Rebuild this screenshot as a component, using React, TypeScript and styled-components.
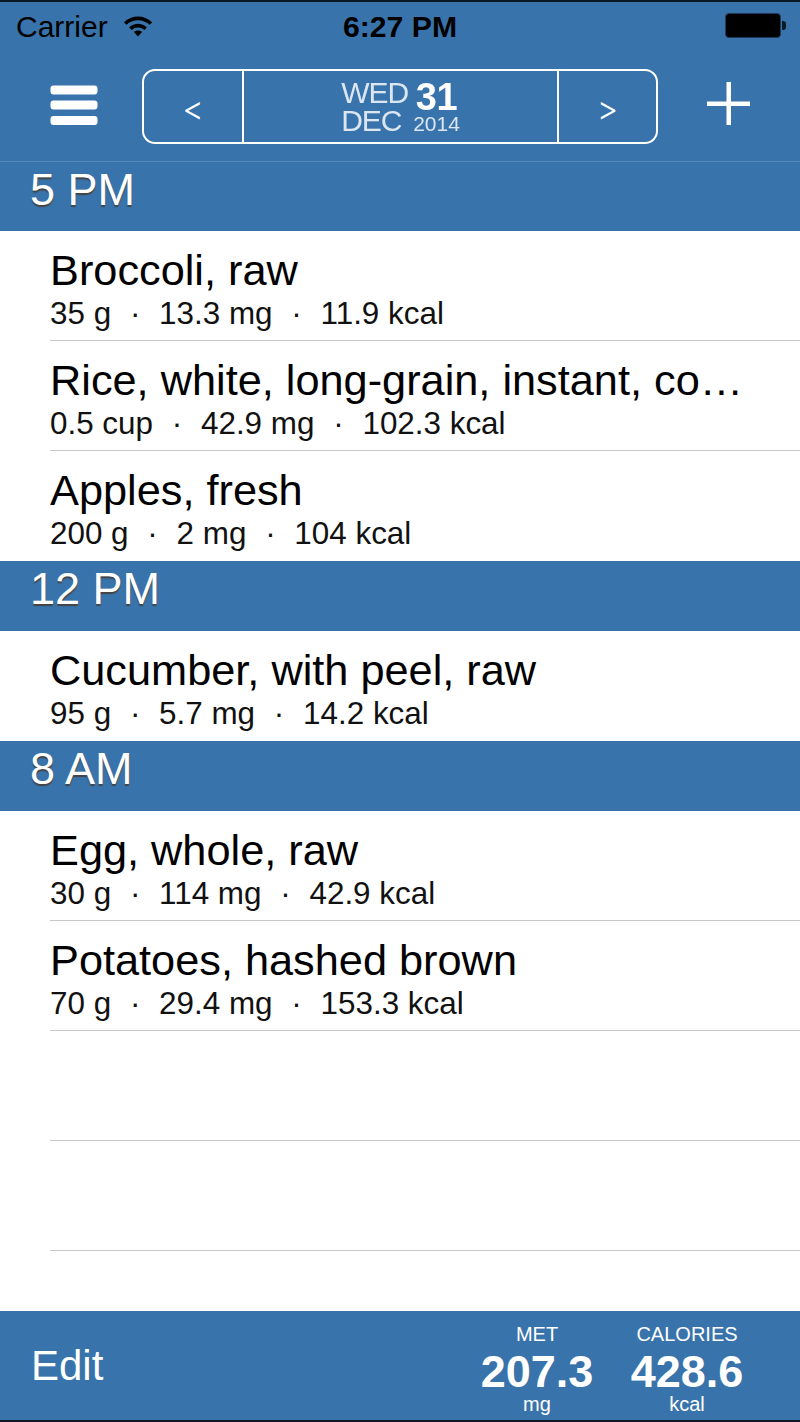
import React from 'react';
import styled, {createGlobalStyle} from "styled-components";

const sections = [
    {
        time: "5 PM",
        items: [
            {name: "Broccoli, raw", amount: "35 g", met: "13.3 mg", kcal: "11.9 kcal"},
            {name: "Rice, white, long-grain, instant, cooked", amount: "0.5 cup", met: "42.9 mg", kcal: "102.3 kcal"},
            {name: "Apples, fresh", amount: "200 g", met: "2 mg", kcal: "104 kcal"},
        ],
    },
    {
        time: "12 PM",
        items: [
            {name: "Cucumber, with peel, raw", amount: "95 g", met: "5.7 mg", kcal: "14.2 kcal"},
        ],
    },
    {
        time: "8 AM",
        items: [
            {name: "Egg, whole, raw", amount: "30 g", met: "114 mg", kcal: "42.9 kcal"},
            {name: "Potatoes, hashed brown", amount: "70 g", met: "29.4 mg", kcal: "153.3 kcal"},
        ],
    },
];

const WifiIcon = () => (
    <svg width="30" height="23" viewBox="0 0 32 24">
        <path d="M1 8.5C9.5 0.5 22.5 0.5 31 8.5L28.4 11.2C21.4 4.8 10.6 4.8 3.6 11.2Z" fill="#000"/>
        <path d="M6.6 14C12 9 20 9 25.4 14L22.8 16.7C18.8 13.2 13.2 13.2 9.2 16.7Z" fill="#000"/>
        <path d="M11.6 19C14.2 16.8 17.8 16.8 20.4 19L16 23.6Z" fill="#000"/>
    </svg>
);

const MenuIcon = () => (
    <svg width="48" height="41" viewBox="0 0 48 41">
        <rect x="0.5" y="0.5" width="47" height="9" rx="3" fill="#fff"/>
        <rect x="0.5" y="15.5" width="47" height="9" rx="3" fill="#fff"/>
        <rect x="0.5" y="31" width="47" height="9" rx="3" fill="#fff"/>
    </svg>
);

const PlusIcon = () => (
    <svg width="43" height="43" viewBox="0 0 43 43">
        <rect x="19.5" y="0" width="4.5" height="43" fill="#fff"/>
        <rect x="0" y="19.5" width="43" height="4.5" fill="#fff"/>
    </svg>
);

export default function App() {
    return (
        <Screen>
            <GlobalStyle/>
            <Header>
                <StatusBar>
                    <Carrier>Carrier <WifiIcon/></Carrier>
                    <Clock>6:27 PM</Clock>
                    <Battery><BatteryNub/></Battery>
                </StatusBar>
                <NavBar>
                    <MenuIcon/>
                    <DatePicker>
                        <DateArrow>&lt;</DateArrow>
                        <DateCell>
                            <DateWords>WED<br/>DEC</DateWords>
                            <DateNumbers>
                                <DayNumber>31</DayNumber>
                                <YearNumber>2014</YearNumber>
                            </DateNumbers>
                        </DateCell>
                        <DateArrow>&gt;</DateArrow>
                    </DatePicker>
                    <PlusIcon/>
                </NavBar>
            </Header>
            <List>
                {sections.map(section => (
                    <section key={section.time}>
                        <SectionTitle>{section.time}</SectionTitle>
                        {section.items.map((item, i) => (
                            <Row key={item.name} $last={i === section.items.length - 1 && section.time !== "8 AM"}>
                                <FoodName>{item.name}</FoodName>
                                <FoodInfo>
                                    {item.amount}<Dot>·</Dot>{item.met}<Dot>·</Dot>{item.kcal}
                                </FoodInfo>
                            </Row>
                        ))}
                    </section>
                ))}
                <Row/>
                <Row/>
            </List>
            <Footer>
                <EditLabel>Edit</EditLabel>
                <Totals>
                    <Total>
                        <TotalLabel>MET</TotalLabel>
                        <TotalValue>207.3</TotalValue>
                        <TotalUnit>mg</TotalUnit>
                    </Total>
                    <Total>
                        <TotalLabel>CALORIES</TotalLabel>
                        <TotalValue>428.6</TotalValue>
                        <TotalUnit>kcal</TotalUnit>
                    </Total>
                </Totals>
            </Footer>
        </Screen>
    );
}

const blue = "#3873ab";

const GlobalStyle = createGlobalStyle`
  html, body {
    margin: 0;
    padding: 0;
    background: #fff;
    font-family: "Liberation Sans", Arial, sans-serif;
  }
`

const Screen = styled.div`
  width: 800px;
  height: 1422px;
  display: flex;
  flex-direction: column;
  overflow: hidden;
  background: #fff;
`

const Header = styled.header`
  height: 161px;
  box-sizing: border-box;
  flex-shrink: 0;
  background: ${blue};
  border-top: 2px solid #0c1a28;
`

const StatusBar = styled.div`
  height: 50px;
  padding: 0 19px 0 16px;
  display: flex;
  align-items: center;
  justify-content: space-between;
  color: #000;
  font-size: 30px;
`

const Carrier = styled.div`
  width: 203px;
  display: flex;
  align-items: center;
  gap: 15px;

  svg {
    margin-bottom: 3px;
  }
`

const Clock = styled.div`
  font-size: 30.2px;
  font-weight: bold;
`

const Battery = styled.div`
  height: 25px;
  box-sizing: border-box;
  flex: 0 0 56px;
  margin-left: 144px;
  margin-bottom: 3px;
  position: relative;
  background: #000;
  border: 1px solid #1c3a58;
  border-radius: 4px;
`

const BatteryNub = styled.span`
  position: absolute;
  right: -6px;
  top: 7px;
  width: 4px;
  height: 9px;
  background: #0c1a28;
  border-radius: 0 3px 3px 0;
`

const NavBar = styled.div`
  height: 109px;
  padding: 17px 50px 0;
  display: flex;
  align-items: flex-start;
  justify-content: space-between;
  box-sizing: border-box;

  & > svg {
    margin-top: 16px;
  }

  & > svg:last-child {
    margin-top: 13px;
  }
`

const DatePicker = styled.div`
  width: 516px;
  height: 75px;
  box-sizing: border-box;
  margin-left: 44px;
  margin-right: 49px;
  flex-shrink: 0;
  display: grid;
  grid-template-columns: 98px 1fr 97px;
  border: 2.5px solid #fff;
  border-radius: 13px;
`

const DateArrow = styled.div`
  display: flex;
  align-items: center;
  justify-content: center;
  color: #fff;
  font-family: Inter, "Liberation Sans", sans-serif;
  font-size: 33px;
  font-weight: 300;
  padding-top: 2px;
`

const DateCell = styled.div`
  display: flex;
  align-items: center;
  justify-content: center;
  gap: 5px;
  border-left: 2.5px solid #fff;
  border-right: 2.5px solid #fff;
  color: #dbe6f1;
`

const DateWords = styled.div`
  font-size: 30px;
  line-height: 28px;
  letter-spacing: -1px;
  filter: blur(0.5px);
`

const DateNumbers = styled.div`
  display: flex;
  flex-direction: column;
  align-items: center;
  filter: blur(0.5px);
`

const DayNumber = styled.div`
  font-size: 38px;
  line-height: 34px;
  font-weight: bold;
  letter-spacing: -0.5px;
  color: #fff;
  margin-top: 1px;
`

const YearNumber = styled.div`
  font-size: 21px;
  line-height: 20px;
`

const List = styled.main`
  flex: 1;
  overflow: hidden;

  section:first-child h2 {
    border-top: 1px solid #5288bb;
    line-height: 55px;
  }
`

const SectionTitle = styled.h2`
  margin: 0;
  height: 70px;
  box-sizing: border-box;
  padding-left: 30px;
  background: ${blue};
  color: #fff;
  font-size: 45px;
  font-weight: normal;
  line-height: 56px;
  text-shadow: 0 2px 1px #444;
`

const Row = styled.div<{$last?: boolean}>`
  height: 110px;
  box-sizing: border-box;
  margin-left: 50px;
  padding-top: 14px;
  border-bottom: 1px solid ${p => p.$last ? "transparent" : "#c8c7cc"};
  color: #000;
`

const FoodName = styled.div`
  width: 702px;
  font-size: 43.3px;
  line-height: 51px;
  white-space: nowrap;
  overflow: hidden;
  text-overflow: ellipsis;
`

const FoodInfo = styled.div`
  font-size: 31.4px;
  line-height: 35px;
  color: #111;
`

const Dot = styled.span`
  display: inline-block;
  width: 48px;
  text-align: center;
`

const Footer = styled.footer`
  height: 111px;
  flex-shrink: 0;
  box-sizing: border-box;
  padding: 0 57px 0 31px;
  display: flex;
  align-items: center;
  justify-content: space-between;
  background: ${blue};
  border-bottom: 2px solid #0c1a28;
  color: #fff;
`

const EditLabel = styled.div`
  font-size: 42px;
`

const Totals = styled.div`
  display: flex;
  gap: 38px;
  align-self: flex-start;
  margin-top: 11px;
`

const Total = styled.div`
  width: 112px;
  display: flex;
  flex-direction: column;
  align-items: center;
  white-space: nowrap;
`

const TotalLabel = styled.div`
  font-size: 20px;
  line-height: 24px;
`

const TotalUnit = styled.div`
  font-size: 20px;
  line-height: 20px;
`

const TotalValue = styled.div`
  font-size: 45px;
  line-height: 44px;
  margin-top: 4px;
  font-weight: bold;
`
